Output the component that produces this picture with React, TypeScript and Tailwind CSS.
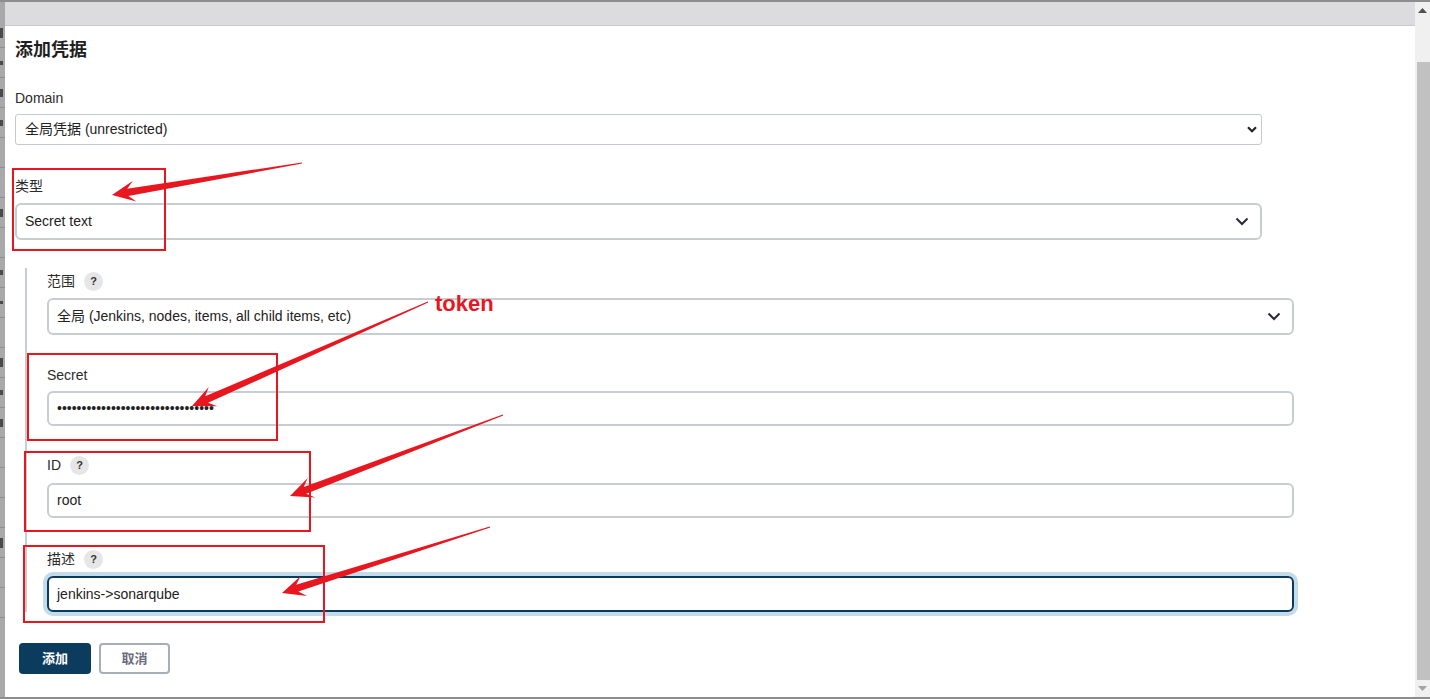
import React from 'react';

const font = "font-['Liberation_Sans','Noto_Sans_CJK_SC',sans-serif]";

type Pt = [number, number];

// tapered annotation arrow, thin at the tail and thick by the head
const arrowPoints = (tail: Pt, tip: Pt) => {
  const dx = tip[0] - tail[0];
  const dy = tip[1] - tail[1];
  const len = Math.hypot(dx, dy);
  const ux = dx / len;
  const uy = dy / len;
  const nx = -uy;
  const ny = ux;
  const at = (d: number, w: number): string =>
    `${(tip[0] - ux * d + nx * w).toFixed(1)},${(tip[1] - uy * d + ny * w).toFixed(1)}`;
  return [
    at(len, 0.6),
    at(16, 3.6),
    at(23, 10.5),
    `${tip[0]},${tip[1]}`,
    at(23, -10.5),
    at(16, -3.6),
    at(len, -0.6),
  ].join(' ');
};

const arrows: [Pt, Pt][] = [
  [[302, 163], [112, 195]],
  [[428, 302], [192, 406]],
  [[503, 415], [290, 496]],
  [[490, 527], [282, 593]],
];

const boxes = [
  { x: 13, y: 169, w: 152, h: 81 },
  { x: 28, y: 354, w: 249, h: 86 },
  { x: 25, y: 452, w: 285, h: 79 },
  { x: 24, y: 546, w: 300, h: 76 },
];

const Help = () => (
  <span className="ml-[9px] inline-flex h-[19px] w-[19px] items-center justify-center rounded-full bg-[#e6e6e6] text-[11px] font-bold text-[#333]">
    ?
  </span>
);

const Chevron = ({ small }: { small?: boolean }) =>
  small ? (
    <svg width="10" height="7" viewBox="0 0 10 7">
      <polyline points="1,1.2 5,5.2 9,1.2" fill="none" stroke="#222" strokeWidth="2.2" />
    </svg>
  ) : (
    <svg width="14" height="9" viewBox="0 0 14 9">
      <polyline points="1.5,1.5 7,7 12.5,1.5" fill="none" stroke="#2a2a35" strokeWidth="2" />
    </svg>
  );

const Label = ({ text, help, className }: { text: string; help?: boolean; className: string }) => (
  <div className={`flex h-[20px] items-center text-[14px] text-[#2b2b2b] ${className}`}>
    <span>{text}</span>
    {help && <Help />}
  </div>
);

const Select = ({ value, className }: { value: string; className: string }) => (
  <div
    className={`flex h-[37px] w-[1247px] items-center justify-between rounded-[6px] border-2 border-[#c6ced3] pl-[8px] pr-[11px] text-[14px] text-[#222] ${className}`}
  >
    <span>{value}</span>
    <Chevron />
  </div>
);

const Input = ({ value, className, focused }: { value: string; className: string; focused?: boolean }) => (
  <div
    className={`flex h-[35px] w-[1247px] items-center rounded-[6px] border-2 pl-[8px] text-[14px] text-[#222] ${
      focused ? 'border-[#0b3b5c] ring-4 ring-[#c4dbe9]' : 'border-[#c6ced3]'
    } ${className}`}
  >
    {value}
  </div>
);

// bits of the page that peeks out behind the dialog
const strip = [10, 4, 8, 6, 0, 0, 8, 0, 5, 3, 0, 9, 5, 8, 0, 0, 0, 10, 0, 0];

export default function App() {
  return (
    <div className={`relative flex h-[699px] w-[1430px] flex-col overflow-hidden bg-white ${font}`}>
      <div className="h-[2px] bg-[#8d8d8d]" />
      <div className="flex min-h-0 flex-1">
        <div className="flex w-[5px] flex-col overflow-hidden bg-[#a9a9a9] pt-[16px]">
          {strip.map((h, i) => (
            <div key={i} className="flex h-[30px] items-center border-b border-[#8f8f8f]">
              {h > 0 && <div className="w-[3px] bg-[#4a4a4a]" style={{ height: h }} />}
            </div>
          ))}
        </div>

        <div className="flex min-w-0 flex-1 flex-col">
          <div className="h-[24px] border-b border-[#c9c9cb] bg-[#dcdcde]" />
          <div className="flex flex-col pl-[10px] pt-[12px]">
            <h1 className="text-[18px] leading-[24px] font-bold text-[#1f1f1f]">添加凭据</h1>

            <Label text="Domain" className="mt-[26px]" />
            <div className="mt-[6px] flex h-[31px] w-[1247px] items-center justify-between rounded-[3px] border border-[#c4cacf] pl-[9px] pr-[4px] text-[14px] text-[#222]">
              <span>全局凭据 (unrestricted)</span>
              <Chevron small />
            </div>

            <Label text="类型" className="mt-[31px]" />
            <Select value="Secret text" className="mt-[7px]" />

            <div className="ml-[10px] mt-[28px] flex flex-col border-l-2 border-[#c6ced3] pl-[20px] pt-[3px]">
              <Label text="范围" help className="" />
              <Select value="全局 (Jenkins, nodes, items, all child items, etc)" className="mt-[7px] h-[36px]" />

              <Label text="Secret" className="mt-[30px]" />
              <Input value={'\u2022'.repeat(32)} className="mt-[6px]" />

              <Label text="ID" help className="mt-[29px]" />
              <Input value="root" className="mt-[8px]" />

              <Label text="描述" help className="mt-[31px]" />
              <Input value="jenkins->sonarqube" focused className="mt-[7px] h-[36px]" />
            </div>

            <div className="ml-[4px] mt-[31px] flex gap-[8px] text-[13px] font-bold">
              <button className="h-[31px] w-[72px] rounded-[4px] bg-[#0b3c5d] text-white">添加</button>
              <button className="h-[31px] w-[71px] rounded-[4px] border-2 border-[#a6afb8] bg-white text-[#6c6c80]">
                取消
              </button>
            </div>
          </div>
        </div>

        {/* scrollbar */}
        <div className="flex w-[15px] flex-col bg-[#f0f0f0]">
          <div className="flex h-[17px] items-center justify-center">
            <svg width="9" height="5" viewBox="0 0 9 5">
              <polygon points="0,5 4.5,0 9,5" fill="#505050" />
            </svg>
          </div>
          <div className="h-[43px]" />
          <div className="ml-[2px] h-[618px] bg-[#c1c1c1]" />
          <div className="flex flex-1 items-center justify-center">
            <svg width="9" height="5" viewBox="0 0 9 5">
              <polygon points="0,0 4.5,5 9,0" fill="#a3a3a3" />
            </svg>
          </div>
        </div>
      </div>
      <div className="h-[2px] bg-[#8d8d8d]" />

      {/* annotations drawn over the screenshot */}
      <svg className="pointer-events-none absolute left-0 top-0" width="1430" height="699">
        {boxes.map((b, i) => (
          <rect key={i} x={b.x} y={b.y} width={b.w} height={b.h} fill="none" stroke="#e8161f" strokeWidth="2" />
        ))}
        {arrows.map(([t, p], i) => (
          <polygon key={i} points={arrowPoints(t, p)} fill="#e8161f" />
        ))}
      </svg>
      <div className="pointer-events-none absolute left-[435px] top-[287px] text-[22px] font-bold text-[#e8161f]">token</div>
    </div>
  );
}
